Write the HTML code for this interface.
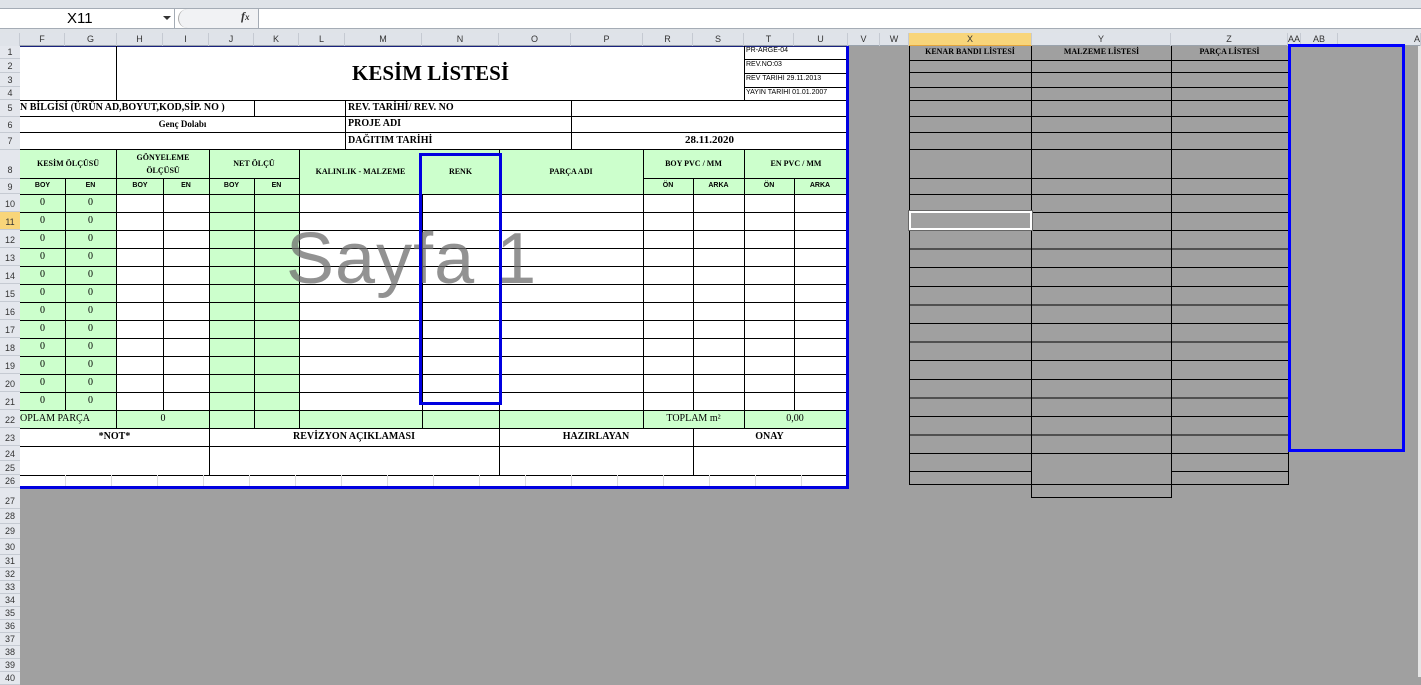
<!DOCTYPE html>
<html><head><meta charset="utf-8">
<style>
*{margin:0;padding:0;box-sizing:border-box}
body{width:1421px;height:677px;overflow:hidden;background:#a0a0a0;position:relative;font-family:"Liberation Serif",serif}
.a{position:absolute}
.ch{position:absolute;top:33px;height:13px;font:9px "Liberation Sans",sans-serif;color:#333;text-align:center;line-height:13px;border-right:1px solid #c5cad2}
.rn{position:absolute;left:0;width:20px;font:9px "Liberation Sans",sans-serif;color:#333;text-align:center;border-bottom:1px solid #c5cad2;background:#e4e7ed}
.hl{position:absolute;height:1px;background:#000}
.vl{position:absolute;width:1px;background:#000}
.t{position:absolute;font-weight:bold;font-size:9px;color:#000;text-align:center;white-space:nowrap;font-family:"Liberation Serif",serif}
.g{position:absolute;background:#ccffcc}
</style></head><body>
<!-- formula bar -->
<div class="a" style="left:0;top:0;width:1421px;height:33px;background:#dfe3e8"></div>
<div class="a" style="left:0;top:8px;width:1421px;height:21px;background:#fff;border-top:1px solid #a5acb5;border-bottom:1px solid #a5acb5"></div>
<div class="a" style="left:0;top:9px;width:175px;height:19px;border-right:1px solid #a5acb5;font:15px 'Liberation Sans',sans-serif;padding-left:67px;line-height:19px;color:#000">X11</div>
<div class="a" style="left:163px;top:16px;border-left:4px solid transparent;border-right:4px solid transparent;border-top:4px solid #333"></div>
<div class="a" style="left:178px;top:9px;width:80px;height:19px;background:#f1f2f4;border-radius:10px 0 0 10px;border-left:1px solid #aaa"></div>
<div class="a" style="left:241px;top:9px;font:italic bold 12px 'Liberation Serif',serif;color:#333">f<span style="font-size:9px">x</span></div>
<div class="a" style="left:258px;top:9px;width:1px;height:19px;background:#a5acb5"></div>
<!-- column headers -->
<div class="a" style="left:0;top:33px;width:1421px;height:13px;background:#dfe3e9;border-bottom:1px solid #9aa3ad"></div>
<div class="a" style="left:0;top:33px;width:20px;height:13px;background:#dfe3e9;border-right:1px solid #c5cad2"></div>
<div class="ch" style="left:20px;width:45px">F</div><div class="ch" style="left:65px;width:52px">G</div>
<div class="ch" style="left:117px;width:46px">H</div><div class="ch" style="left:163px;width:46px">I</div>
<div class="ch" style="left:209px;width:45px">J</div><div class="ch" style="left:254px;width:45px">K</div>
<div class="ch" style="left:299px;width:46px">L</div><div class="ch" style="left:345px;width:77px">M</div>
<div class="ch" style="left:422px;width:77px">N</div><div class="ch" style="left:499px;width:72px">O</div>
<div class="ch" style="left:571px;width:72px">P</div><div class="ch" style="left:643px;width:50px">R</div>
<div class="ch" style="left:693px;width:51px">S</div><div class="ch" style="left:744px;width:50px">T</div>
<div class="ch" style="left:794px;width:54px">U</div><div class="ch" style="left:848px;width:32px">V</div>
<div class="ch" style="left:880px;width:29px">W</div>
<div class="ch" style="left:909px;width:123px;background:#f8d57a;border-bottom:1px solid #e3a53c">X</div>
<div class="ch" style="left:1032px;width:139px">Y</div><div class="ch" style="left:1171px;width:117px">Z</div>
<div class="ch" style="left:1288px;width:13px">AA</div><div class="ch" style="left:1301px;width:37px">AB</div>
<div class="ch" style="left:1338px;width:83px;text-align:right">A</div>
<!-- row headers -->
<div class="a" style="left:0;top:46px;width:20px;height:631px;background:#e4e7ed;border-right:1px solid #9aa3ad"></div>
<div class="rn" style="top:46px;height:13px;line-height:13px">1</div>
<div class="rn" style="top:59px;height:14px;line-height:14px">2</div>
<div class="rn" style="top:73px;height:14px;line-height:14px">3</div>
<div class="rn" style="top:87px;height:13px;line-height:13px">4</div>
<div class="rn" style="top:100px;height:17px;line-height:17px">5</div>
<div class="rn" style="top:117px;height:16px;line-height:16px">6</div>
<div class="rn" style="top:133px;height:17px;line-height:17px">7</div>
<div class="rn" style="top:150px;height:29px;line-height:40px">8</div>
<div class="rn" style="top:179px;height:15px;line-height:17px">9</div>
<div class="rn" style="top:194px;height:18px;line-height:20px">10</div>
<div class="rn" style="top:212px;height:18px;line-height:20px;background:#f8d57a">11</div>
<div class="rn" style="top:230px;height:18px;line-height:20px">12</div>
<div class="rn" style="top:248px;height:18px;line-height:20px">13</div>
<div class="rn" style="top:266px;height:18px;line-height:20px">14</div>
<div class="rn" style="top:284px;height:18px;line-height:20px">15</div>
<div class="rn" style="top:302px;height:18px;line-height:20px">16</div>
<div class="rn" style="top:320px;height:18px;line-height:20px">17</div>
<div class="rn" style="top:338px;height:18px;line-height:20px">18</div>
<div class="rn" style="top:356px;height:18px;line-height:20px">19</div>
<div class="rn" style="top:374px;height:18px;line-height:20px">20</div>
<div class="rn" style="top:392px;height:18px;line-height:20px">21</div>
<div class="rn" style="top:410px;height:18px;line-height:20px">22</div>
<div class="rn" style="top:428px;height:18px;line-height:20px">23</div>
<div class="rn" style="top:446px;height:15px;line-height:16px">24</div>
<div class="rn" style="top:461px;height:14px;line-height:15px">25</div>
<div class="rn" style="top:475px;height:13px;line-height:13px">26</div>
<div class="rn" style="top:488px;height:21px;line-height:26px">27</div>
<div class="rn" style="top:509px;height:15px;line-height:15px">28</div>
<div class="rn" style="top:524px;height:15px;line-height:15px">29</div>
<div class="rn" style="top:539px;height:16px;line-height:16px">30</div>
<div class="rn" style="top:555px;height:13px;line-height:13px">31</div>
<div class="rn" style="top:568px;height:13px;line-height:13px">32</div>
<div class="rn" style="top:581px;height:13px;line-height:13px">33</div>
<div class="rn" style="top:594px;height:13px;line-height:13px">34</div>
<div class="rn" style="top:607px;height:13px;line-height:13px">35</div>
<div class="rn" style="top:620px;height:13px;line-height:13px">36</div>
<div class="rn" style="top:633px;height:13px;line-height:13px">37</div>
<div class="rn" style="top:646px;height:13px;line-height:13px">38</div>
<div class="rn" style="top:659px;height:13px;line-height:13px">39</div>
<div class="rn" style="top:672px;height:13px;line-height:13px">40</div>

<!-- main sheet -->
<div class="a" style="left:20px;top:46px;width:828px;height:442px;background:#fff;border-top:1px solid #1a237e"></div>
<!-- green areas -->
<div class="g" style="left:20px;top:150px;width:828px;height:44px"></div>
<div class="g" style="left:20px;top:194px;width:97px;height:216px"></div>
<div class="g" style="left:209px;top:194px;width:90px;height:216px"></div>
<div class="g" style="left:20px;top:410px;width:828px;height:18px"></div>
<!-- data grid rows 10-21 -->
<div class="a" style="left:20px;top:194px;width:828px;height:217px;background:repeating-linear-gradient(to bottom,#000 0,#000 1px,transparent 1px,transparent 18px)"></div>
<!-- horizontal lines upper -->
<div class="hl" style="left:744px;top:59px;width:104px"></div>
<div class="hl" style="left:744px;top:73px;width:104px"></div>
<div class="hl" style="left:744px;top:87px;width:104px"></div>
<div class="hl" style="left:20px;top:100px;width:828px"></div>
<div class="hl" style="left:20px;top:116px;width:828px"></div>
<div class="hl" style="left:20px;top:132px;width:828px"></div>
<div class="hl" style="left:20px;top:149px;width:828px"></div>
<div class="hl" style="left:20px;top:178px;width:279px"></div>
<div class="hl" style="left:643px;top:178px;width:205px"></div>
<div class="hl" style="left:20px;top:428px;width:828px"></div>
<div class="hl" style="left:20px;top:446px;width:828px"></div>
<div class="hl" style="left:20px;top:475px;width:828px"></div>
<!-- vertical lines -->
<div class="vl" style="left:116px;top:46px;height:54px"></div>
<div class="vl" style="left:744px;top:46px;height:54px"></div>
<div class="vl" style="left:254px;top:100px;height:16px"></div>
<div class="vl" style="left:345px;top:100px;height:49px"></div>
<div class="vl" style="left:571px;top:100px;height:49px"></div>
<div class="vl" style="left:116px;top:149px;height:279px"></div>
<div class="vl" style="left:209px;top:149px;height:326px"></div>
<div class="vl" style="left:299px;top:149px;height:279px"></div>
<div class="vl" style="left:499px;top:149px;height:326px"></div>
<div class="vl" style="left:643px;top:149px;height:279px"></div>
<div class="vl" style="left:744px;top:149px;height:279px"></div>
<div class="vl" style="left:65px;top:178px;height:232px"></div>
<div class="vl" style="left:163px;top:178px;height:232px"></div>
<div class="vl" style="left:254px;top:178px;height:250px"></div>
<div class="vl" style="left:693px;top:178px;height:232px"></div>
<div class="vl" style="left:794px;top:178px;height:232px"></div>
<div class="vl" style="left:422px;top:194px;height:234px"></div>
<div class="vl" style="left:693px;top:428px;height:47px"></div>
<!-- row 26 light lines -->
<div class="a" style="left:20px;top:475px;width:828px;height:13px;background:repeating-linear-gradient(to right,transparent 0,transparent 45px,#ddd 45px,#ddd 46px)"></div>
<!-- blue outline -->
<div class="a" style="left:846px;top:46px;width:3px;height:443px;background:#0000e0"></div>
<div class="a" style="left:20px;top:486px;width:829px;height:3px;background:#0000e0"></div>

<!-- texts -->
<div class="t" style="left:117px;top:61px;width:627px;font-size:21px">KESİM LİSTESİ</div>
<div class="t" style="left:746px;top:47px;font-size:7px;font-weight:normal;font-family:'Liberation Sans',sans-serif">PR-ARGE-04</div>
<div class="t" style="left:746px;top:61px;font-size:7px;font-weight:normal;font-family:'Liberation Sans',sans-serif">REV.NO:03</div>
<div class="t" style="left:746px;top:75px;font-size:7px;font-weight:normal;font-family:'Liberation Sans',sans-serif">REV TARİHİ 29.11.2013</div>
<div class="t" style="left:746px;top:89px;font-size:7px;font-weight:normal;font-family:'Liberation Sans',sans-serif">YAYIN TARİHİ 01.01.2007</div>
<div class="t" style="left:20px;top:102px;font-size:10px">N BİLGİSİ (ÜRÜN AD,BOYUT,KOD,SİP. NO )</div>
<div class="t" style="left:348px;top:102px;font-size:10px">REV. TARİHİ/ REV. NO</div>
<div class="t" style="left:20px;top:119px;width:325px;font-size:9px">Genç Dolabı</div>
<div class="t" style="left:348px;top:118px;font-size:10px">PROJE ADI</div>
<div class="t" style="left:348px;top:135px;font-size:10px">DAĞITIM TARİHİ</div>
<div class="t" style="left:571px;top:134px;width:277px;font-size:11px">28.11.2020</div>
<div class="t" style="left:20px;top:159px;width:96px;font-size:8px">KESİM ÖLÇÜSÜ</div>
<div class="t" style="left:117px;top:151px;width:92px;font-size:8px;line-height:13px">GÖNYELEME<br>ÖLÇÜSÜ</div>
<div class="t" style="left:209px;top:159px;width:90px;font-size:8px">NET ÖLÇÜ</div>
<div class="t" style="left:299px;top:167px;width:123px;font-size:8px">KALINLIK - MALZEME</div>
<div class="t" style="left:422px;top:167px;width:77px;font-size:8px">RENK</div>
<div class="t" style="left:499px;top:167px;width:144px;font-size:8px">PARÇA ADI</div>
<div class="t" style="left:643px;top:159px;width:101px;font-size:8px">BOY PVC / MM</div>
<div class="t" style="left:744px;top:159px;width:104px;font-size:8px">EN PVC / MM</div>
<div class="t" style="left:20px;top:182px;width:45px;font-size:7px;font-family:'Liberation Sans',sans-serif">BOY</div>
<div class="t" style="left:65px;top:182px;width:51px;font-size:7px;font-family:'Liberation Sans',sans-serif">EN</div>
<div class="t" style="left:117px;top:182px;width:46px;font-size:7px;font-family:'Liberation Sans',sans-serif">BOY</div>
<div class="t" style="left:163px;top:182px;width:46px;font-size:7px;font-family:'Liberation Sans',sans-serif">EN</div>
<div class="t" style="left:209px;top:182px;width:45px;font-size:7px;font-family:'Liberation Sans',sans-serif">BOY</div>
<div class="t" style="left:254px;top:182px;width:45px;font-size:7px;font-family:'Liberation Sans',sans-serif">EN</div>
<div class="t" style="left:643px;top:182px;width:50px;font-size:7px;font-family:'Liberation Sans',sans-serif">ÖN</div>
<div class="t" style="left:693px;top:182px;width:51px;font-size:7px;font-family:'Liberation Sans',sans-serif">ARKA</div>
<div class="t" style="left:744px;top:182px;width:50px;font-size:7px;font-family:'Liberation Sans',sans-serif">ÖN</div>
<div class="t" style="left:794px;top:182px;width:52px;font-size:7px;font-family:'Liberation Sans',sans-serif">ARKA</div>
<!-- zeros -->
<div class="a" style="left:20px;top:194px;width:45px;font:10px 'Liberation Serif',serif;text-align:center;line-height:18px">0<br>0<br>0<br>0<br>0<br>0<br>0<br>0<br>0<br>0<br>0<br>0</div>
<div class="a" style="left:65px;top:194px;width:51px;font:10px 'Liberation Serif',serif;text-align:center;line-height:18px">0<br>0<br>0<br>0<br>0<br>0<br>0<br>0<br>0<br>0<br>0<br>0</div>
<div class="t" style="left:20px;top:413px;font-weight:normal;font-size:10px">OPLAM PARÇA</div>
<div class="t" style="left:117px;top:413px;width:92px;font-weight:normal;font-size:10px">0</div>
<div class="t" style="left:643px;top:413px;width:101px;font-weight:normal;font-size:10px">TOPLAM m²</div>
<div class="t" style="left:744px;top:413px;width:102px;font-weight:normal;font-size:10px">0,00</div>
<div class="t" style="left:20px;top:431px;width:189px;font-size:10px">*NOT*</div>
<div class="t" style="left:209px;top:431px;width:290px;font-size:10px">REVİZYON AÇIKLAMASI</div>
<div class="t" style="left:499px;top:431px;width:194px;font-size:10px">HAZIRLAYAN</div>
<div class="t" style="left:693px;top:431px;width:153px;font-size:10px">ONAY</div>
<!-- watermark -->
<div class="a" style="left:286px;top:218px;font:72px 'Liberation Sans',sans-serif;color:rgba(110,110,110,0.75);letter-spacing:1px">Sayfa 1</div>
<!-- N selection box -->
<div class="a" style="left:419px;top:153px;width:83px;height:252px;border:3px solid #0000e0"></div>

<!-- right area -->
<div class="hl" style="left:909px;top:60px;width:379px"></div>
<div class="hl" style="left:909px;top:72px;width:379px"></div>
<div class="hl" style="left:909px;top:87px;width:379px"></div>
<div class="hl" style="left:909px;top:100px;width:379px"></div>
<div class="hl" style="left:909px;top:116px;width:379px"></div>
<div class="hl" style="left:909px;top:132px;width:379px"></div>
<div class="hl" style="left:909px;top:149px;width:379px"></div>
<div class="hl" style="left:909px;top:178px;width:379px"></div>
<div class="hl" style="left:909px;top:194px;width:379px"></div>
<div class="hl" style="left:909px;top:212px;width:379px"></div>
<div class="a" style="left:909px;top:230px;width:379px;height:225px;background:repeating-linear-gradient(to bottom,#000 0,#000 1px,transparent 1px,transparent 18.6px)"></div>
<div class="hl" style="left:909px;top:471px;width:123px"></div>
<div class="hl" style="left:1171px;top:471px;width:117px"></div>
<div class="hl" style="left:909px;top:484px;width:379px"></div>
<div class="hl" style="left:1032px;top:497px;width:139px"></div>
<div class="vl" style="left:909px;top:46px;height:439px"></div>
<div class="vl" style="left:1031px;top:46px;height:452px"></div>
<div class="vl" style="left:1171px;top:46px;height:452px"></div>
<div class="vl" style="left:1288px;top:46px;height:439px"></div>
<div class="t" style="left:909px;top:47px;width:122px;font-size:8px">KENAR BANDI LİSTESİ</div>
<div class="t" style="left:1032px;top:47px;width:139px;font-size:8px">MALZEME LİSTESİ</div>
<div class="t" style="left:1171px;top:47px;width:117px;font-size:8px">PARÇA LİSTESİ</div>
<div class="a" style="left:909px;top:211px;width:123px;height:19px;border:2px solid #fff;outline:1px solid #666"></div>
<div class="a" style="left:1288px;top:44px;width:117px;height:408px;border:3px solid #0000ff"></div>
<div class="a" style="left:1418px;top:46px;width:3px;height:631px;background:#e6e6e6"></div>
</body></html>
